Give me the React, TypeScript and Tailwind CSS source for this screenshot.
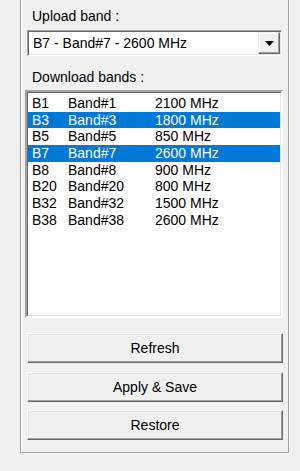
import React from "react";

const rows = [
  { b: "B1", n: "Band#1", f: "2100 MHz", sel: false },
  { b: "B3", n: "Band#3", f: "1800 MHz", sel: true },
  { b: "B5", n: "Band#5", f: "850 MHz", sel: false },
  { b: "B7", n: "Band#7", f: "2600 MHz", sel: true },
  { b: "B8", n: "Band#8", f: "900 MHz", sel: false },
  { b: "B20", n: "Band#20", f: "800 MHz", sel: false },
  { b: "B32", n: "Band#32", f: "1500 MHz", sel: false },
  { b: "B38", n: "Band#38", f: "2600 MHz", sel: false },
];

function Btn({ label, className }: { label: string; className?: string }) {
  return (
    <div
      className={
        "ml-[5px] w-[256px] h-[30px] flex items-center justify-center bg-[#f0f0f0] border border-t-white border-l-white border-r-[#696969] border-b-[#696969] shadow-[inset_-1px_-1px_0_#a0a0a0,inset_1px_1px_0_#e3e3e3] text-[14px] leading-[16px] text-black " +
        (className ?? "")
      }
    >
      {label}
    </div>
  );
}

export default function App() {
  return (
    <div className="w-[300px] h-[471px] bg-[#f0f0f0] pl-[20px] font-['Liberation_Sans',Arial,sans-serif] text-[14px] text-black">
      <div className="w-[270px] h-[454px] border-l border-r border-b border-l-[#a0a0a0] border-r-white border-b-white">
        <div className="w-[268px] h-[453px] border-l border-r border-b border-l-white border-r-[#a0a0a0] border-b-[#a0a0a0] flex flex-col">
          <div className="flex flex-col w-[266px] h-full">
            <div className="mt-[8px] ml-[10px] h-[16px] leading-[16px]">Upload band :</div>
            <div className="mt-[6px] ml-[5px] w-[255px] h-[26px] bg-white border border-t-[#a0a0a0] border-l-[#a0a0a0] border-r-white border-b-white shadow-[inset_1px_1px_0_#696969,inset_-1px_-1px_0_#e3e3e3] flex items-center">
              <div className="flex-1 pl-[5px] leading-[16px]">B7 - Band#7 - 2600 MHz</div>
              <div className="mr-[1px] w-[22px] h-[22px] bg-[#f0f0f0] border border-t-[#f0f0f0] border-l-[#f0f0f0] border-r-[#696969] border-b-[#696969] shadow-[inset_-1px_-1px_0_#a0a0a0,inset_1px_1px_0_#ffffff] flex items-center justify-center">
                <svg width="9" height="5" viewBox="0 0 9 5">
                  <path d="M0 0H9L4.5 5Z" fill="#000" />
                </svg>
              </div>
            </div>
            <div className="mt-[13px] ml-[10px] h-[16px] leading-[16px]">Download bands :</div>
            <div className="mt-[5px] ml-[3px] w-[258px] h-[228px] bg-white border-2 border-t-[#a0a0a0] border-l-[#a0a0a0] border-r-white border-b-white shadow-[inset_1px_1px_0_#696969,inset_-1px_-1px_0_#e3e3e3] pt-[3px] pl-[1px] pr-[1px]">
              {rows.map((r) => (
                <div
                  key={r.b}
                  className={
                    "flex h-[16.67px] leading-[16.67px] pl-[4px] whitespace-nowrap " +
                    (r.sel ? "bg-[#0078d7] text-white" : "text-black")
                  }
                >
                  <span className="w-[36px]">{r.b}</span>
                  <span className="w-[87px]">{r.n}</span>
                  <span>{r.f}</span>
                </div>
              ))}
            </div>
            <Btn label="Refresh" className="mt-[15px]" />
            <Btn label="Apply & Save" className="mt-[8.5px]" />
            <Btn label="Restore" className="mt-[8.5px]" />
          </div>
        </div>
      </div>
    </div>
  );
}
